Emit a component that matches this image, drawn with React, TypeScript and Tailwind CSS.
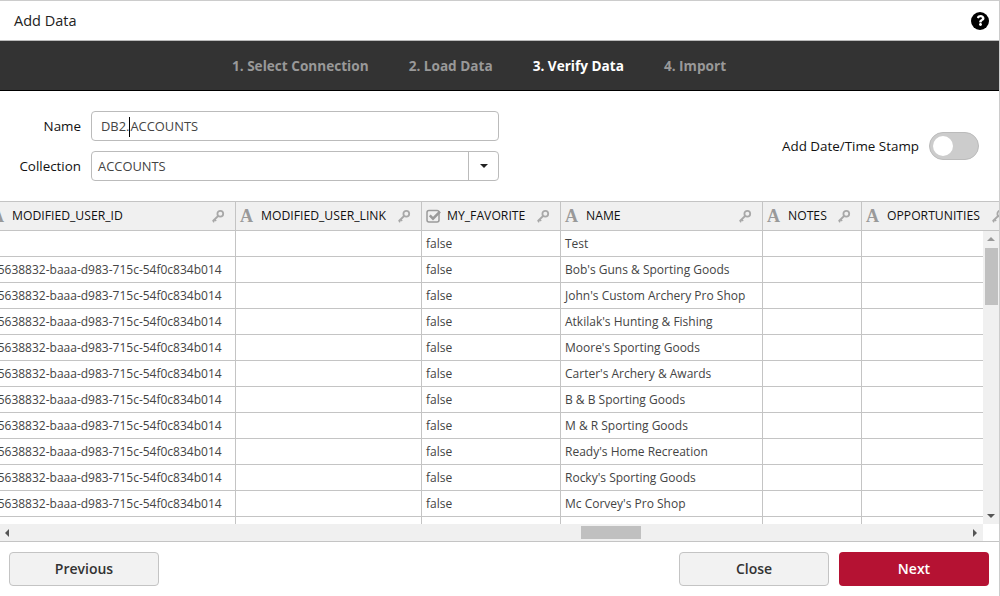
import { FaQuestion } from "react-icons/fa"

const USER_ID = "a5638832-baaa-d983-715c-54f0c834b014"

const columns = [
  { name: "MODIFIED_USER_ID", width: "w-[250px]", type: "text", pad: "pl-[5px]" },
  { name: "MODIFIED_USER_LINK", width: "w-[186px]", type: "text", pad: "pl-[4px]" },
  { name: "MY_FAVORITE", width: "w-[139px]", type: "check", pad: "pl-[4px]" },
  { name: "NAME", width: "w-[202px]", type: "text", pad: "pl-[4px]" },
  { name: "NOTES", width: "w-[99px]", type: "text", pad: "pl-[4px]" },
  { name: "OPPORTUNITIES", width: "w-[154px]", type: "text", pad: "pl-[4px]" },
]

const names = [
  "Test",
  "Bob's Guns & Sporting Goods",
  "John's Custom Archery Pro Shop",
  "Atkilak's Hunting & Fishing",
  "Moore's Sporting Goods",
  "Carter's Archery & Awards",
  "B & B Sporting Goods",
  "M & R Sporting Goods",
  "Ready's Home Recreation",
  "Rocky's Sporting Goods",
  "Mc Corvey's Pro Shop",
  "",
]

function KeyIcon() {
  return (
    <svg viewBox="0 0 14 14" className="h-[14px] w-[14px] shrink-0" fill="none" stroke="#a8a8a8">
      <circle cx="9.3" cy="4.7" r="2.9" strokeWidth="1.8" />
      <path d="M7.2 6.9L1.8 12.3" strokeWidth="2" />
      <path d="M3.6 10.4L5.2 12M2 12L3.2 13.2" strokeWidth="1.4" />
    </svg>
  )
}

function CheckIcon() {
  return (
    <svg viewBox="0 0 16 14" className="h-[14px] w-[16px] shrink-0" fill="none" stroke="#9a9a9a">
      <rect x="1" y="1.5" width="12" height="11.5" rx="2" strokeWidth="1.5" />
      <path d="M3.8 6.4L7 9.6L14 2.6" strokeWidth="2.6" />
    </svg>
  )
}

function Row({ name, index }: { name: string; index: number }) {
  const id = index === 0 || index === 11 ? "" : USER_ID
  const cells = [id, "", index === 11 ? "" : "false", name, "", ""]
  return (
    <div className="flex h-[26px] shrink-0 border-b border-[#c4c4c4]">
      {cells.map((cell, i) => (
        <div
          key={i}
          className={`${columns[i].width} ${columns[i].pad} shrink-0 border-r border-[#c4c4c4] leading-[25px] whitespace-nowrap text-[#444]`}
        >
          {cell}
        </div>
      ))}
    </div>
  )
}

export default function App() {
  return (
    <div className="flex h-[596px] w-[1000px] flex-col overflow-hidden border-r border-t border-[#cccccc] bg-white font-['Open_Sans',sans-serif] text-[12px]">
      <header className="flex h-[39px] shrink-0 items-center justify-between pl-[14px] pr-[10px] text-[14.5px] text-[#222]">
        <span>Add Data</span>
        <span className="flex h-[18px] w-[18px] items-center justify-center rounded-full bg-black text-white">
          <FaQuestion className="h-[11px] w-[11px]" />
        </span>
      </header>

      <nav className="flex h-[51px] shrink-0 items-center justify-center gap-[40px] border-b border-t border-b-black border-t-[#bbbbbb] bg-[#333333] pr-[41px] pt-[1px] text-[13.6px] font-bold text-[#999999]">
        <span>1. Select Connection</span>
        <span>2. Load Data</span>
        <span className="text-white">3. Verify Data</span>
        <span>4. Import</span>
      </nav>

      <section className="flex h-[110px] shrink-0 items-center justify-between pr-[20px] text-[13.4px] text-[#111]">
        <div className="flex flex-col gap-[10px]">
          <div className="flex items-center">
            <label className="w-[81px] pt-[1px] text-right">Name</label>
            <div className="ml-[10px] flex h-[30px] w-[408px] items-center rounded-[4px] border border-[#bbbbbb] pl-[9px] pt-[1px] text-[12.9px] text-[#444]">
              DB2.<span className="h-[20px] w-px bg-black" />ACCOUNTS
            </div>
          </div>
          <div className="flex items-center">
            <label className="w-[81px] pt-[1px] text-right">Collection</label>
            <div className="ml-[10px] flex h-[30px] w-[408px] items-center rounded-[4px] border border-[#bbbbbb] text-[12.9px] text-[#444]">
              <span className="flex-1 pl-[6px] pt-[1px]">ACCOUNTS</span>
              <span className="flex h-full w-[30px] items-center justify-center border-l border-[#bbbbbb]">
                <span className="h-0 w-0 border-x-[4px] border-t-[4px] border-x-transparent border-t-[#222]" />
              </span>
            </div>
          </div>
        </div>
        <div className="flex items-center gap-[10px]">
          <span className="pt-[1px]">Add Date/Time Stamp</span>
          <span className="flex h-[28px] w-[50px] items-center rounded-full border border-[#bbbbbb] bg-[#cccccc] pl-[3px]">
            <span className="h-[20px] w-[20px] rounded-full bg-white" />
          </span>
        </div>
      </section>

      <div className="flex h-[341px] shrink-0 flex-col border-b border-[#c4c4c4]">
        <div className="flex h-[30px] shrink-0 -ml-[14px] border-b border-t border-[#c4c4c4] bg-[#f0f0f0] text-[12.2px] text-[#111]">
          {columns.map((col) => (
            <div
              key={col.name}
              className={`${col.width} ${col.pad} flex shrink-0 items-center border-r border-[#c4c4c4] pr-[10px]`}
            >
              {col.type === "check" ? (
                <CheckIcon />
              ) : (
                <span className="w-[16px] shrink-0 font-['Liberation_Serif',serif] text-[18px] font-bold text-[#999]">A</span>
              )}
              <span className="ml-[5px] flex-1 whitespace-nowrap">{col.name}</span>
              <KeyIcon />
            </div>
          ))}
        </div>
        <div className="flex min-h-0 flex-1">
          <div className="flex min-w-0 flex-1 flex-col">
            <div className="min-h-0 flex-1 overflow-hidden">
              <div className="-ml-[14px] flex w-[1100px] flex-col">
                {names.map((name, i) => (
                  <Row key={i} name={name} index={i} />
                ))}
              </div>
            </div>
            <div className="flex h-[17px] shrink-0 items-center bg-[#f0f0f0] pl-[5px] pr-[6px]">
              <span className="h-0 w-0 border-y-[4px] border-r-[4px] border-y-transparent border-r-[#555]" />
              <span className="ml-[572px] h-[13px] w-[60px] bg-[#c0c0c0]" />
              <span className="ml-auto h-0 w-0 border-y-[4px] border-l-[4px] border-y-transparent border-l-[#555]" />
            </div>
          </div>
          <div className="flex w-[16px] shrink-0 flex-col">
            <div className="flex h-[293px] flex-col items-center bg-[#f0f0f0] pt-[6px]">
              <span className="h-0 w-0 border-x-[4px] border-b-[4px] border-x-transparent border-b-[#999]" />
              <span className="mt-[7px] h-[57px] w-[13px] bg-[#c0c0c0]" />
              <span className="mb-[6px] mt-auto h-0 w-0 border-x-[4px] border-t-[4px] border-x-transparent border-t-[#555]" />
            </div>
          </div>
        </div>
      </div>

      <footer className="flex flex-1 items-center justify-between pb-[1px] pl-[9px] pr-[10px] text-[14px] font-semibold text-[#333]">
        <button className="h-[34px] w-[150px] rounded-[4px] border border-[#c4c4c4] bg-[#f2f2f2]">Previous</button>
        <div className="flex gap-[10px]">
          <button className="h-[34px] w-[150px] rounded-[4px] border border-[#c4c4c4] bg-[#f2f2f2]">Close</button>
          <button className="h-[34px] w-[150px] rounded-[4px] bg-[#b51233] text-white">Next</button>
        </div>
      </footer>
    </div>
  )
}
